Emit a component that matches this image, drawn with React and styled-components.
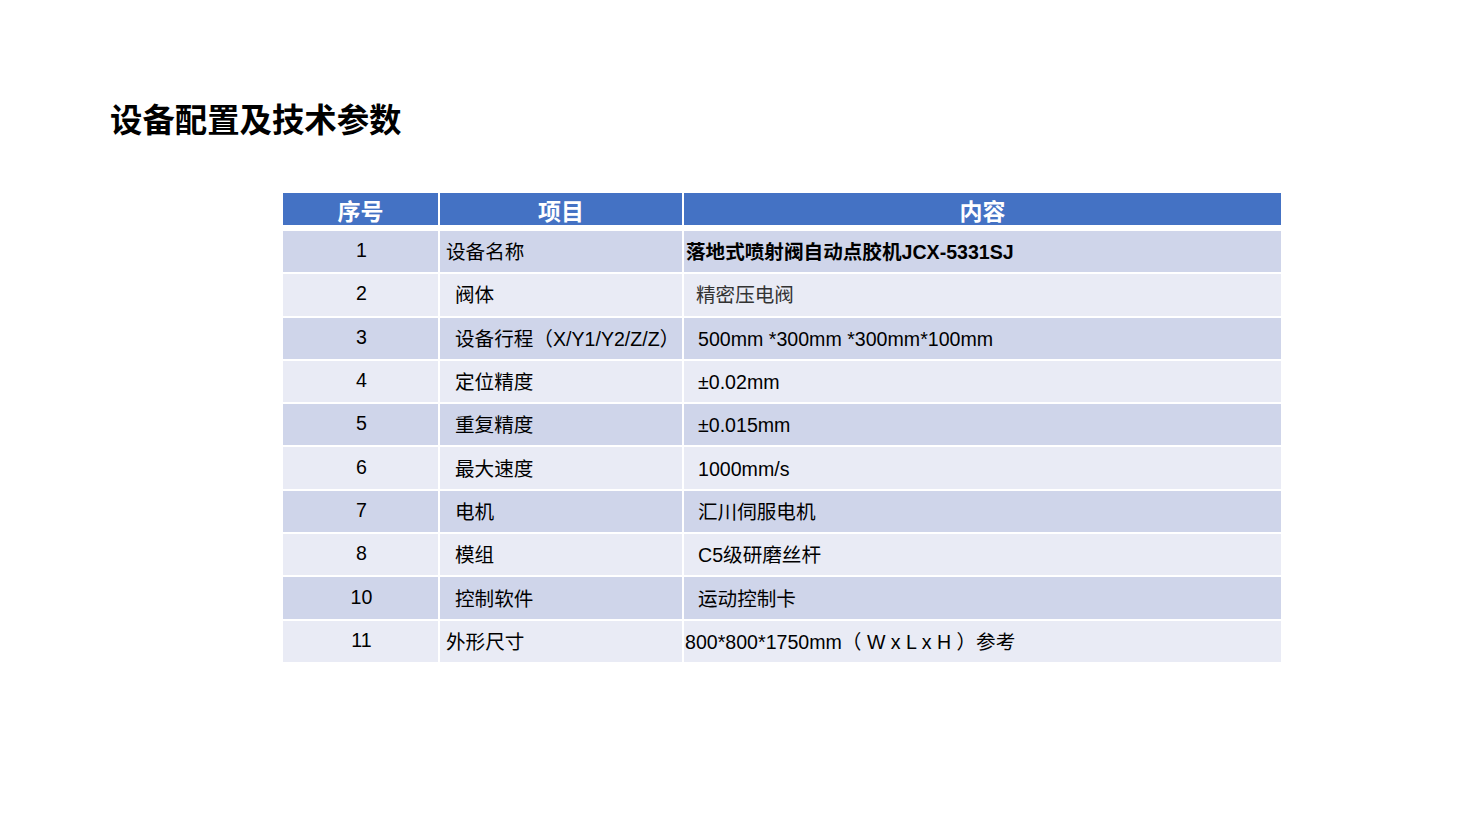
import styled, { createGlobalStyle } from 'styled-components';

const GlobalStyle = createGlobalStyle`
  html, body {
    margin: 0;
    padding: 0;
    background: #ffffff;
  }
  body {
    font-family: "Liberation Sans", "Noto Sans CJK SC", sans-serif;
    color: #000000;
  }
`;

const Slide = styled.div`
  width: 1461px;
  height: 822px;
  box-sizing: border-box;
  padding: 102px 0 0 110px;
  background: #ffffff;
`;

const Title = styled.h1`
  margin: 0 0 59px;
  font-family: "Noto Sans CJK SC", sans-serif;
  font-size: 32.4px;
  line-height: 32px;
  font-weight: 700;
  color: #000000;
`;

const Table = styled.table`
  margin-left: 173px;
  width: 998px;
  table-layout: fixed;
  border-collapse: separate;
  border-spacing: 0;
`;

const HeadCell = styled.th`
  box-sizing: border-box;
  height: 36px;
  padding: 2px 0 0;
  background: #4472c4;
  color: #ffffff;
  font-family: "Noto Sans CJK SC", sans-serif;
  font-size: 23px;
  font-weight: 700;
  line-height: 28px;
  text-align: center;
  vertical-align: middle;
  border-bottom: 4px solid #ffffff;
  border-right: ${p => (p.$last ? '0' : '2px solid #ffffff')};
`;

const Row = styled.tr`
  background: ${p => (p.$odd ? '#cfd5ea' : '#e9ebf5')};
`;

const Cell = styled.td`
  box-sizing: border-box;
  height: 43.3px;
  padding: 1px 4px 0 ${p => p.$pad}px;
  border-top: 2px solid #ffffff;
  border-right: ${p => (p.$last ? '0' : '2px solid #ffffff')};
  font-size: 19.6px;
  line-height: 24px;
  font-weight: ${p => (p.$bold ? 700 : 400)};
  text-align: left;
  vertical-align: middle;
  white-space: nowrap;
  color: ${p => (p.$soft ? '#333333' : '#000000')};
`;

const NumCell = styled(Cell)`
  padding: 0 0 3px 2px;
  text-align: center;
`;

const rows = [
  { no: '1', item: '设备名称', itemPad: 6, value: '落地式喷射阀自动点胶机JCX-5331SJ', valuePad: 2, bold: true },
  { no: '2', item: '阀体', itemPad: 15, value: '精密压电阀', valuePad: 12, soft: true },
  { no: '3', item: '设备行程（X/Y1/Y2/Z/Z）', itemPad: 15, value: '500mm *300mm *300mm*100mm', valuePad: 14 },
  { no: '4', item: '定位精度', itemPad: 15, value: '±0.02mm', valuePad: 14 },
  { no: '5', item: '重复精度', itemPad: 15, value: '±0.015mm', valuePad: 14 },
  { no: '6', item: '最大速度', itemPad: 15, value: '1000mm/s', valuePad: 14 },
  { no: '7', item: '电机', itemPad: 15, value: '汇川伺服电机', valuePad: 14 },
  { no: '8', item: '模组', itemPad: 15, value: 'C5级研磨丝杆', valuePad: 14 },
  { no: '10', item: '控制软件', itemPad: 15, value: '运动控制卡', valuePad: 14 },
  { no: '11', item: '外形尺寸', itemPad: 6, value: '800*800*1750mm（ W x L x H ）参考', valuePad: 1 },
];

export default function App() {
  return (
    <>
      <GlobalStyle />
      <Slide>
        <Title>设备配置及技术参数</Title>
        <Table>
          <colgroup>
            <col style={{ width: 157 }} />
            <col style={{ width: 244 }} />
            <col style={{ width: 597 }} />
          </colgroup>
          <thead>
            <tr>
              <HeadCell>序号</HeadCell>
              <HeadCell>项目</HeadCell>
              <HeadCell $last>内容</HeadCell>
            </tr>
          </thead>
          <tbody>
            {rows.map((r, i) => (
              <Row key={r.no} $odd={i % 2 === 0}>
                <NumCell>{r.no}</NumCell>
                <Cell $pad={r.itemPad}>{r.item}</Cell>
                <Cell $last $pad={r.valuePad} $bold={r.bold} $soft={r.soft}>{r.value}</Cell>
              </Row>
            ))}
          </tbody>
        </Table>
      </Slide>
    </>
  );
}
